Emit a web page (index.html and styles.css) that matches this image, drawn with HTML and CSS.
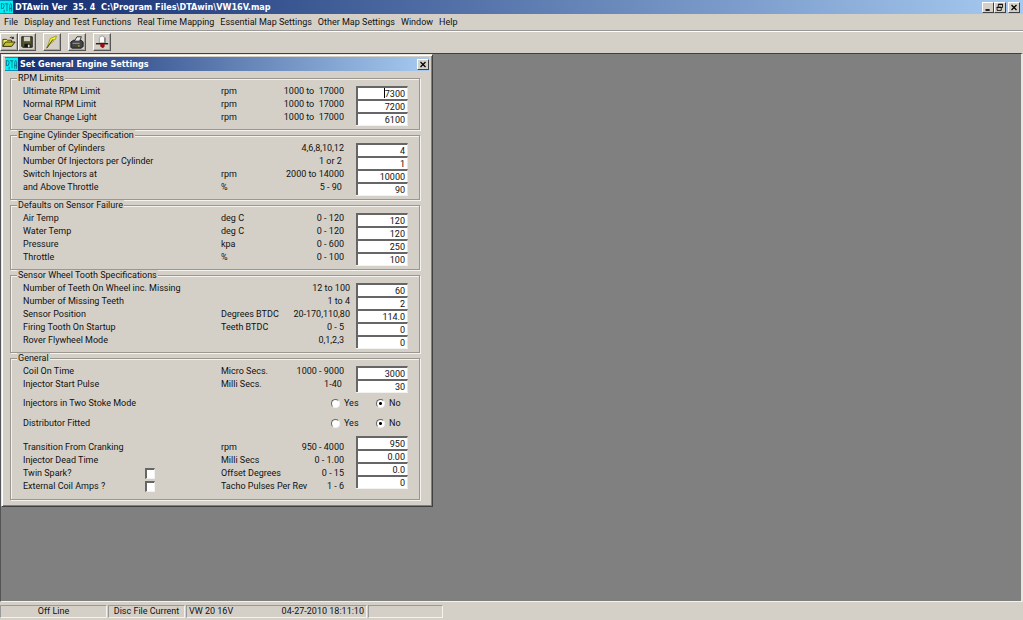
FILE: index.html
```html
<!DOCTYPE html>
<html lang="en">
<head>
<meta charset="utf-8">
<title>DTAwin Ver 35. 4</title>
<link rel="stylesheet" href="styles.css">
</head>
<body>
<div class="app">
  <header class="titlebar">
    <svg class="logo" viewBox="0 0 14 14" aria-hidden="true"><rect width="14" height="14" fill="#00f0f8"/><path d="M1.500 3v6M1.500 3.500h2l1 2-1 3h-2M5 3.500h4M7.500 3.500v8M10.500 12V5l1-2 1 2v7M10 8.500h3M4.500 10v3" fill="none" stroke="#087888"/></svg>
    <h1 class="title">DTAwin Ver&nbsp; 35. 4&nbsp; C:\Program Files\DTAwin\VW16V.map</h1>
    <div class="controls">
      <button class="ctl" aria-label="Minimize"><svg viewBox="0 0 12 10"><path d="M3 8h5" stroke="#000" stroke-width="2"/></svg></button>
      <button class="ctl" aria-label="Restore"><svg viewBox="0 0 12 10"><path d="M4 4V1h5v4H8M4 1.500h5M2.500 4.500h5v4h-5zM2 5h6" fill="none" stroke="#000"/></svg></button>
      <button class="ctl ctl-close" aria-label="Close"><svg viewBox="0 0 12 10"><path d="M3 2l6 6M9 2L3 8" stroke="#000" stroke-width="1.500"/></svg></button>
    </div>
  </header>
  <nav class="menu">
    <button>File</button><button>Display and Test Functions</button><button>Real Time Mapping</button><button>Essential Map Settings</button><button>Other Map Settings</button><button>Window</button><button>Help</button>
  </nav>
  <div class="toolbar">
    <div class="tools">
      <button class="tool" aria-label="Open"><svg viewBox="0 0 16 16"><path d="M1 13V5h4l1 1h5v3" fill="#f4ef63" stroke="#333300"/><path d="M1 13l3-5h11l-4 5z" fill="#c4c030" stroke="#222200"/><path d="M9 3q3-2 4 1m0 0V2m0 2h-2" fill="none" stroke="#222"/></svg></button>
      <button class="tool" aria-label="Save"><svg viewBox="0 0 16 16"><path d="M2 2h12v12H3l-1-1z" fill="#55552c" stroke="#111"/><path d="M4.500 2h7v5h-7z" fill="#d4d0c8"/><path d="M5 10h7v4H5z" fill="#111"/><path d="M9 11h2v3H9z" fill="#ddd"/></svg></button>
    </div>
    <button class="tool" aria-label="Send"><svg viewBox="0 0 16 16"><path d="M2 15L6 4l7-3-1 4-3 1 1 1-4 3z" fill="#f7f32c" stroke="#999920"/><path d="M2 15L9 5" stroke="#333" fill="none"/></svg></button>
    <button class="tool" aria-label="Print"><svg viewBox="0 0 16 16"><path d="M1 8l3-2h9l2 2v5l-2 2H2l-1-1z" fill="#454545" stroke="#111"/><path d="M5 7l3-5h5l-2 5z" fill="#eee" stroke="#222"/><path d="M3 9.500h8" stroke="#aaa"/><path d="M9 12.500h2" stroke="#e8e830"/></svg></button>
    <button class="tool" aria-label="Exit"><svg viewBox="0 0 16 16"><path d="M5 9V4q0-3 3-3t3 3v5z" fill="#fff" stroke="#999"/><path d="M11.500 3v6" stroke="#555"/><path d="M1 10h14" stroke="#111" stroke-width="1.500"/><path d="M6 10h5v3l-2 2-3-2z" fill="#981010"/></svg></button>
  </div>
  <main class="workspace">
    <form class="dialog">
      <header class="titlebar dialog-title">
        <svg class="logo" viewBox="0 0 14 14" aria-hidden="true"><rect width="14" height="14" fill="#00f0f8"/><path d="M1.500 3v6M1.500 3.500h2l1 2-1 3h-2M5 3.500h4M7.500 3.500v8M10.500 12V5l1-2 1 2v7M10 8.500h3M4.500 10v3" fill="none" stroke="#087888"/></svg>
        <h2 class="title">Set General Engine Settings</h2>
        <button type="button" class="ctl" aria-label="Close dialog"><svg viewBox="0 0 12 10"><path d="M3 2l6 6M9 2L3 8" stroke="#000" stroke-width="1.500"/></svg></button>
      </header>
      <div class="groups">
        <fieldset class="group">
          <legend>RPM Limits</legend>
          <div class="block">
            <div class="facts">
              <label for="ult">Ultimate RPM Limit</label><span>rpm</span><span class="range">1000 to&nbsp; 17000</span>
              <label for="norm">Normal RPM Limit</label><span>rpm</span><span class="range">1000 to&nbsp; 17000</span>
              <label for="gear">Gear Change Light</label><span>rpm</span><span class="range">1000 to&nbsp; 17000</span>
            </div>
            <div class="entries"><div class="caret-field"><input id="ult" value="7300"><i class="caret"></i></div><input id="norm" value="7200"><input id="gear" value="6100"></div>
          </div>
        </fieldset>
        <fieldset class="group">
          <legend>Engine Cylinder Specification</legend>
          <div class="block">
            <div class="facts">
              <label for="cyl">Number of Cylinders</label><span></span><span class="range">4,6,8,10,12</span>
              <label for="inj">Number Of Injectors per Cylinder</label><span></span><span class="range">1 or 2&nbsp;</span>
              <label for="sw">Switch Injectors at</label><span>rpm</span><span class="range">2000 to 14000</span>
              <label for="thr">and Above Throttle</label><span>%</span><span class="range">5 - 90&nbsp;</span>
            </div>
            <div class="entries"><input id="cyl" value="4"><input id="inj" value="1"><input id="sw" value="10000"><input id="thr" value="90"></div>
          </div>
        </fieldset>
        <fieldset class="group">
          <legend>Defaults on Sensor Failure</legend>
          <div class="block">
            <div class="facts">
              <label for="air">Air Temp</label><span>deg C</span><span class="range">0 - 120</span>
              <label for="water">Water Temp</label><span>deg C</span><span class="range">0 - 120</span>
              <label for="press">Pressure</label><span>kpa</span><span class="range">0 - 600</span>
              <label for="throttle">Throttle</label><span>%</span><span class="range">0 - 100</span>
            </div>
            <div class="entries"><input id="air" value="120"><input id="water" value="120"><input id="press" value="250"><input id="throttle" value="100"></div>
          </div>
        </fieldset>
        <fieldset class="group">
          <legend>Sensor Wheel Tooth Specifications</legend>
          <div class="block">
            <div class="facts">
              <label for="teeth">Number of Teeth On Wheel inc. Missing</label><span></span><span class="range wide">12 to 100</span>
              <label for="missing">Number of Missing Teeth</label><span></span><span class="range wide">1 to 4</span>
              <label for="pos">Sensor Position</label><span>Degrees BTDC</span><span class="range wide">20-170,110,80</span>
              <label for="firing">Firing Tooth On Startup</label><span>Teeth BTDC</span><span class="range">0 - 5</span>
              <label for="rover">Rover Flywheel Mode</label><span></span><span class="range">0,1,2,3</span>
            </div>
            <div class="entries"><input id="teeth" value="60"><input id="missing" value="2"><input id="pos" value="114.0"><input id="firing" value="0"><input id="rover" value="0"></div>
          </div>
        </fieldset>
        <fieldset class="group group-general">
          <legend>General</legend>
          <div class="block">
            <div class="facts">
              <label for="coil">Coil On Time</label><span>Micro Secs.</span><span class="range">1000 - 9000</span>
              <label for="pulse">Injector Start Pulse</label><span>Milli Secs.</span><span class="range">1-40&nbsp;</span>
            </div>
            <div class="entries"><input id="coil" value="3000"><input id="pulse" value="30"></div>
          </div>
          <div class="choice" role="radiogroup" aria-labelledby="two"><span id="two">Injectors in Two Stoke Mode</span><label><input type="radio" name="two">Yes</label><label><input type="radio" name="two" checked>No</label></div>
          <div class="choice" role="radiogroup" aria-labelledby="dist"><span id="dist">Distributor Fitted</span><label><input type="radio" name="dist">Yes</label><label><input type="radio" name="dist" checked>No</label></div>
          <div class="block block-low">
            <div class="facts">
              <label for="trans">Transition From Cranking</label><span>rpm</span><span class="range">950 - 4000</span>
              <label for="dead">Injector Dead Time</label><span>Milli Secs</span><span class="range">0 - 1.00</span>
              <label class="check">Twin Spark?<input type="checkbox"></label><label for="offset">Offset Degrees</label><span class="range">0 - 15</span>
              <label class="check">External Coil Amps ?<input type="checkbox"></label><label for="tacho">Tacho Pulses Per Rev</label><span class="range">1 - 6</span>
            </div>
            <div class="entries"><input id="trans" value="950"><input id="dead" value="0.00"><input id="offset" value="0.0"><input id="tacho" value="0"></div>
          </div>
        </fieldset>
      </div>
    </form>
  </main>
  <footer class="status">
    <div class="panel panel-line">Off Line</div>
    <div class="panel panel-disc">Disc File Current</div>
    <div class="panel panel-file"><span>VW 20 16V</span><span>04-27-2010 18:11:10</span></div>
    <div class="panel panel-empty"></div>
  </footer>
</div>
</body>
</html>
```
FILE: styles.css
```css
* { box-sizing: border-box; }

body {
  margin: 0;
  background: #d4d0c8;
  color: #111;
  font: 9px/11px Roboto, "Liberation Sans", sans-serif;
}

button, input { font: inherit; color: inherit; margin: 0; padding: 0; border-radius: 0; }

.app { display: flex; flex-direction: column; min-height: 100vh; }

.titlebar {
  display: flex;
  align-items: center;
  gap: 2px;
  height: 14px;
  padding-right: 3px;
  background: linear-gradient(90deg, #10296d, #a6caf0);
}
.logo { width: 13px; height: 14px; flex: none; }
.title {
  flex: 1;
  margin: 0;
  color: #fff;
  font: bold 9px/13px "DejaVu Sans Condensed", "DejaVu Sans", sans-serif;
  white-space: nowrap;
}
.controls { display: flex; }
.ctl {
  width: 12px;
  height: 11px;
  flex: none;
  background: #d4d0c8;
  border: 1px solid;
  border-color: #fff #404040 #404040 #fff;
}
.ctl svg { display: block; width: 100%; height: 100%; }
.ctl-close { margin-left: 2px; }

.menu {
  display: flex;
  gap: 6px;
  height: 17px;
  padding: 0 4px;
  border-bottom: 1px solid #999;
}
.menu button {
  background: none;
  border: 0;
  line-height: 16px;
  white-space: nowrap;
}

.toolbar {
  display: flex;
  align-items: center;
  gap: 7px;
  height: 22px;
  padding-bottom: 1px;
  border-top: 1px solid #fff;
}
.tools { display: flex; }
.tool {
  width: 18px;
  height: 18px;
  background: #d4d0c8;
  border: 1px solid;
  border-color: #fff #555 #555 #fff;
  box-shadow: inset -1px -1px #aaa79f;
}
.tool svg { display: block; width: 14px; height: 14px; margin: 0 auto; }

.workspace {
  flex: 1;
  background: #808080;
  border: solid;
  border-width: 1px 2px 1px 1px;
  border-color: #404040 #e8e6e0 #f4f2ee #555;
}

.dialog {
  width: 432px;
  padding: 2px 3px 6px;
  background: #d4d0c8;
  border: 1px solid;
  border-color: #e8e6e0 #404040 #404040 #e8e6e0;
  box-shadow: inset 1px 1px #fff, inset -1px -1px #808080;
}
.dialog-title { padding-right: 0; }

.groups { padding: 2px 9px 0 5px; }
.group {
  min-width: 0;
  margin: 0;
  padding: 3px 11px 3px 12px;
  border: 1px solid #999790;
  box-shadow: 1px 1px #f4f2ee, inset 1px 1px #f4f2ee;
}
.group legend {
  height: 10px;
  margin-left: -6px;
  padding: 0 1px;
  line-height: 10px;
  background: #d4d0c8;
}
.group-general { padding-bottom: 5px; }

.block { display: flex; align-items: flex-start; }
.facts {
  flex: 1;
  min-width: 0;
  display: grid;
  grid-template-columns: 198px minmax(0, 1fr) auto;
  grid-auto-rows: 13px;
  line-height: 10px;
  white-space: nowrap;
}
.range { text-align: right; padding-right: 12px; }
.range.wide { padding-right: 6px; }

.entries {
  display: flex;
  flex: none;
  flex-direction: column;
  width: 52px;
  border-bottom: 1px solid #f4f2ee;
}
.entries input {
  display: block;
  width: 100%;
  height: 13px;
  padding: 1px 2px 0 0;
  background: #fff;
  border: solid;
  border-width: 2px 1px 0 2px;
  border-color: #666 #e8e6e0 #fff #666;
  outline: 0;
  text-align: right;
}
.caret-field { position: relative; }
.caret { position: absolute; top: 2px; right: 23px; width: 1px; height: 10px; background: #000; }

.choice {
  display: grid;
  grid-template-columns: 308px 45px 1fr;
  align-items: center;
  height: 20px;
}
.choice label { display: flex; align-items: center; gap: 4px; }
.choice input {
  appearance: none;
  width: 9px;
  height: 9px;
  border: 1px solid;
  border-color: #666 #f4f2ee #f4f2ee #666;
  border-radius: 50%;
  background: #fff;
}
.choice input:checked { background: radial-gradient(circle, #000 0 1px, #fff 2px); }

.block-low { margin-top: 3px; }
.block-low .facts { padding-top: 6px; }
.check { display: flex; justify-content: space-between; padding-right: 66px; }
.check input {
  appearance: none;
  width: 10px;
  height: 11px;
  background: #fff;
  border: solid;
  border-width: 2px 1px 1px 2px;
  border-color: #666 #f4f2ee #f4f2ee #666;
}

.status { display: flex; gap: 1px; height: 18px; padding: 3px 0 2px; }
.panel {
  height: 13px;
  border: 1px solid;
  border-color: #999 #f4f2ee #f4f2ee #999;
  white-space: nowrap;
}
.panel-line { width: 107px; text-align: center; }
.panel-disc { width: 77px; text-align: center; }
.panel-file { display: flex; justify-content: space-between; width: 181px; padding: 0 2px; }
.panel-empty { width: 75px; }
```
